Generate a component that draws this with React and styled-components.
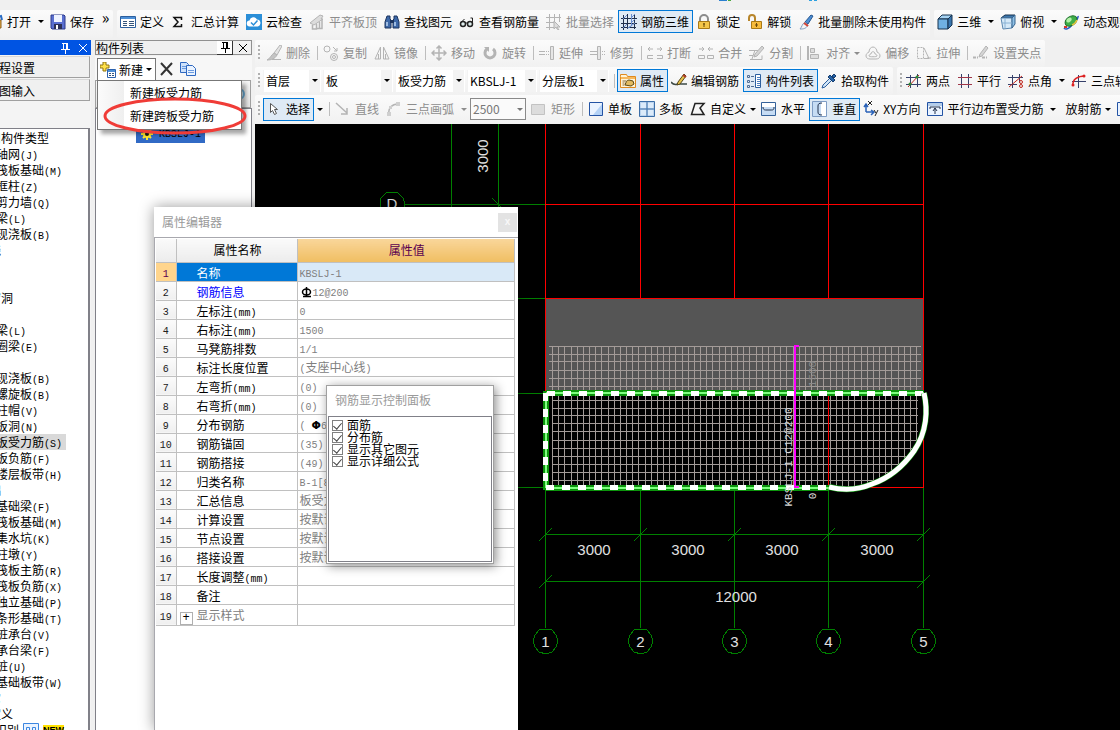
import React, { useState } from "react"
import styled, { createGlobalStyle, css } from "styled-components"

const colors = {
  chrome: "#f0f0f0",
  ink: "#000000",
  disabled: "#8d8d8d",
  line: "#b8b8b8",
  blue: "#0078d7",
  hot: "#dfeaf5",
  green: "#008000",
  red: "#ff0000",
}

const Global = createGlobalStyle`
  * {
    box-sizing: border-box;
  }

  body {
    margin: 0;
    overflow: hidden;
    background: ${colors.chrome};
    color: ${colors.ink};
    font-family: "Noto Sans CJK SC", sans-serif;
    font-size: 12px;
    line-height: 16px;
  }

  button, input, select {
    margin: 0;
    font: inherit;
    color: inherit;
  }
`

/* ---------- icons ---------- */

const g = "#b4b4b4"

const icons = {
  open: (
    <>
      <path d="M1 5h5l1 1h7v8H1z" fill="#e9b44c" stroke="#8a5a17" />
      <path d="M10 3l4-1 1 4" fill="none" stroke="#2a6cc4" strokeWidth="2" />
    </>
  ),
  save: (
    <>
      <path d="M1 1h13l1 1v13H2l-1-1z" fill="#5a6fd0" stroke="#2c3a8c" />
      <path d="M4 1h8v7H4z" fill="#eef3ff" />
      <path d="M4 10h8v5H4z" fill="#2b2f55" />
      <path d="M6 11h2v4H6z" fill="#fff" />
    </>
  ),
  define: (
    <>
      <path d="M.5 2.5h15v11H.5z" fill="#fff" stroke="#2c5f9e" />
      <path d="M1 3h14v2H1z" fill="#4d8fd6" />
      <path d="M3 7.5h4M3 9.5h4M3 11.5h4M9 7.5h5M9 9.5h5M9 11.5h5" stroke="#35557c" />
    </>
  ),
  sigma: <path d="M10.5 6V3.5H3L7 8l-4 4.5h7.5V10" fill="none" stroke="#111" strokeWidth="1.5" />,
  cloud: (
    <>
      <path d="M0 0h16v16H0z" fill="#2b8fd8" />
      <path d="M4 12.5a3 3 0 0 1-.5-6 4 4 0 0 1 7.5-1 3.6 3.6 0 0 1 1 7z" fill="#fff" />
      <path d="M5 8.5l2.500 2.500 4-4.500" fill="none" stroke="#2b8fd8" strokeWidth="1.5" />
    </>
  ),
  slab: (
    <>
      <path d="M1 9l10-8 3 1-2 3h2L5 11z" fill="#dcdcdc" stroke={g} />
      <path d="M3.500 11v4h4v-5M8 14.500h5V6M10.500 8v6" fill="none" stroke={g} strokeWidth="1.5" />
    </>
  ),
  find: (
    <>
      <path d="M3 2h3v3l1 1v8H1V8zM10 2h3l2 6v6H9V6l1-1z" fill="#3d68a8" stroke="#1c355f" />
      <path d="M6 6h4v3H6z" fill="#1c355f" />
      <path d="M3 8v4M11 8v4" stroke="#bdd6f3" strokeWidth="1.5" />
    </>
  ),
  glasses: (
    <>
      <circle cx="4" cy="10" r="2.500" fill="#dfeeee" stroke="#222" strokeWidth="1.5" />
      <circle cx="11" cy="10" r="2.500" fill="#dfeeee" stroke="#222" strokeWidth="1.5" />
      <path d="M6 9h3M1.500 9l4-4M13.500 10V4h-2" fill="none" stroke="#222" />
    </>
  ),
  batch: (
    <>
      <path d="M3.500 0v16M8.500 0v10M13.500 0v8M0 3.500h15M0 8.500h9M0 13.500h8" stroke={g} />
      <path d="M8 7l6 6-3 0 2 3-2-1-1-2-2 2z" fill="#ddd" stroke={g} />
    </>
  ),
  mesh3d: (
    <>
      <path d="M2.500 1v15M6.500 0v15M13.500 0v15M0 4.500h16M0 9.500h16M0 13.500h15" stroke="#20304c" />
      <path d="M2 14l4-4M10.500 0v12l-4 2M10 4l4-4M10 9l4-4M2 5l4-4M7 14l7-5" fill="none" stroke="#6a8fd1" />
    </>
  ),
  lock: (
    <>
      <path d="M4 8V5a4 4 0 0 1 8 0v3" fill="none" stroke="#8c8c8c" strokeWidth="2" />
      <path d="M2.500 7.500h11v7h-11z" fill="#f5c64a" stroke="#a97a18" />
      <path d="M8 9v4M7 10h2" stroke="#6b4a0a" />
    </>
  ),
  unlock: (
    <>
      <path d="M2 7V4a3 3 0 0 1 6 0v3" fill="none" stroke="#b8862c" strokeWidth="2" />
      <path d="M4.500 7.500h10v7h-10z" fill="#f8bc3c" stroke="#a97a18" />
      <path d="M9.500 9v4M8 11h3" stroke="#6b4a0a" />
    </>
  ),
  purge: (
    <>
      <path d="M13 1l2 1-5 8-3-2z" fill="#4d8fd6" stroke="#27578f" />
      <path d="M7 8l3 3c-2 4-5 4-8 4 2-2 2-5 5-7z" fill="#f6f6f6" stroke="#7f9cc0" />
      <path d="M6 9l4 3" stroke="#d34436" strokeWidth="2" />
    </>
  ),
  cube: (
    <>
      <path d="M1 5l4-4h10l-4 4z" fill="#a5d2f2" stroke="#16324f" />
      <path d="M1 5h10v10H1z" fill="#6fb0e2" stroke="#16324f" />
      <path d="M11 5l4-4v10l-4 4z" fill="#3975ad" stroke="#16324f" />
    </>
  ),
  top: (
    <>
      <path d="M1 4l4-3h10l-3 3z" fill="#3d77ad" stroke="#16324f" />
      <path d="M1 4h11v10l-9 1z" fill="#d5e9f8" stroke="#5b87b0" />
      <path d="M12 4l3-3v9l-3 4z" fill="#8ec0e6" stroke="#37648e" />
      <path d="M5 4v10M2 9h10" stroke="#8ab2d4" />
    </>
  ),
  orbit: (
    <>
      <path d="M1 14c1 2 5 1 8-3s7-6 6-9" fill="none" stroke="#2a56c4" strokeWidth="1.5" />
      <ellipse cx="8" cy="7" rx="6.500" ry="4.500" transform="rotate(-35 8 7)" fill="#3fae48" stroke="#1b6e2a" />
      <ellipse cx="6" cy="6" rx="3" ry="2" transform="rotate(-35 6 6)" fill="#b4f0a8" />
      <path d="M1 13l3 0" stroke="#d8342a" strokeWidth="2" />
      <path d="M9 11c3-1 4-3 5-5" fill="none" stroke="#e8c23a" strokeWidth="1.5" />
    </>
  ),
  brush: (
    <>
      <path d="M14 0l2 1-5 9-3-2z" fill="#e4e4e4" stroke={g} />
      <path d="M8 8l3 2c-2 4-6 5-10 5 3-1 4-5 7-7z" fill="#c4c4c4" stroke={g} />
      <path d="M6 14.500h9" stroke={g} />
    </>
  ),
  copy: (
    <>
      <circle cx="4" cy="4" r="3" fill="none" stroke={g} />
      <circle cx="11" cy="12" r="3.500" fill="none" stroke={g} />
      <circle cx="11" cy="12" r="1.500" fill="none" stroke={g} />
      <path d="M10 2l4 4M14 3v3h-3" fill="none" stroke={g} />
    </>
  ),
  mirror: <path d="M6.500 2v12H1zM9.500 2v12H15zM4.500 9v5M11.500 9v5" fill="none" stroke={g} />,
  move: (
    <path
      d="M8 1v14M1 8h14M5.500 3.500L8 1l2.500 2.500M5.500 12.500L8 15l2.500-2.500M3.500 5.500L1 8l2.500 2.500M12.500 5.500L15 8l-2.500 2.500"
      fill="none"
      stroke={g}
      strokeWidth="1.5"
    />
  ),
  rotate: (
    <>
      <path d="M5 4a5 5 0 1 0 6 0" fill="none" stroke={g} strokeWidth="3" />
      <path d="M2 2h5v5z" fill={g} />
    </>
  ),
  extend: (
    <>
      <path d="M0 6.500h6M0 9.500h6" stroke={g} />
      <path d="M7 6.500h4M7 9.500h4" stroke={g} strokeDasharray="1 1" />
      <path d="M11.500 1.500h3v13h-3z" fill="#e6e6e6" stroke={g} />
    </>
  ),
  trim: (
    <>
      <path d="M0 6.500h7M0 9.500h7" stroke={g} />
      <path d="M12 6.500h4M12 9.500h4" stroke={g} strokeDasharray="1 1" />
      <path d="M7.500 1.500h3v13h-3z" fill="#e6e6e6" stroke={g} />
    </>
  ),
  split: (
    <>
      <path d="M6 4H1l2-2M1 4l2 2M10 4h5l-2-2M15 4l-2 2" fill="none" stroke={g} />
      <path d="M6 10.500H.5v3H6M10 10.500h5.500v3H10" fill="none" stroke={g} />
    </>
  ),
  merge: (
    <>
      <path d="M1 4h5L4 2M6 4L4 6M15 4h-5l2-2M10 4l2 2" fill="none" stroke={g} />
      <path d="M.5 10.500h6v3h-6zM9.500 10.500h6v3h-6z" fill="none" stroke={g} />
    </>
  ),
  cut: (
    <>
      <path d="M0 5.500h9M0 10.500h4M1 14.500h12v-4M3 14l3-9" fill="none" stroke={g} />
      <path d="M13 1l2 2-7 8-3 1 1-3z" fill="#d5d5d5" stroke={g} />
    </>
  ),
  align: (
    <>
      <path d="M2 1v14" stroke={g} strokeWidth="2" />
      <path d="M4.500 3.500h4v4h-4zM4.500 9.500h8v4h-8z" fill="#dedede" stroke={g} />
    </>
  ),
  offset: (
    <>
      <path d="M1 11c0-2 1-3 3-4 0-3 2-5 4-5s4 2 4 5c2 1 3 2 3 4s-2 3-4 3H5c-2 0-4-1-4-3z" fill="none" stroke={g} />
      <path d="M4 11c0-1 1-2 2-2 0-3 4-3 4 0 1 0 2 1 2 2 0 1-8 1-8 0z" fill="none" stroke={g} />
    </>
  ),
  stretch: (
    <>
      <path d="M1.500 2.500h6v11h-6z" fill="none" stroke={g} strokeDasharray="2 1" />
      <path d="M8 3l5 10.500H8M11 13h4" fill="none" stroke={g} />
    </>
  ),
  grip: (
    <>
      <path d="M0 12.500h5M9 12.500h5" stroke={g} strokeWidth="2" strokeDasharray="3 1" />
      <path d="M13 1l2 2-6 8-3 1 1-3z" fill="#d5d5d5" stroke={g} />
    </>
  ),
  props: (
    <>
      <path d="M.5 3.500v-2h6l1 2h8v11H.5z" fill="#fff3d6" stroke="#e08a1e" />
      <path d="M1 4h14v2H1z" fill="#f6b85c" />
      <path d="M5 12c1-3 2-5 4-5l4 1 1 3-3 2z" fill="#e2bb62" stroke="#5d4a17" />
      <path d="M2.500 8h4M2.500 10h2M2.500 12h2" stroke="#8a6a3a" />
    </>
  ),
  edit: (
    <>
      <path d="M0 9c2 3 4 3 7 2h9" stroke="#3d4a46" strokeWidth="1.5" fill="none" />
      <path d="M13 1l2 2-6 8-3 1 1-3z" fill="#e8c24a" stroke="#54461a" />
      <path d="M12 2l3 2" stroke="#b03a2a" strokeWidth="2" />
    </>
  ),
  list: (
    <>
      <path
        d="M1.500 2.500h2v2h-2zM1.500 7.500h2v2h-2zM1.500 12.500h2v2h-2zM5 3.500h3M5 8.500h3M5 13.500h3"
        fill="none"
        stroke="#4e6c94"
      />
      <path d="M9.500 1.500h5v13h-5z" fill="#fff" stroke="#2c5f9e" />
      <path d="M11 4.500h3M11 6.500h3M11 8.500h3M11 10.500h3M11 12.500h3" stroke="#4d7fc0" />
    </>
  ),
  picker: (
    <>
      <path d="M9 5l2 2-7 7-3 1 1-3z" fill="#cfe4f7" stroke="#2c5f9e" />
      <path d="M9 2l5 5-2 2-5-5zM11 3l2-2 2 2-2 2z" fill="#2763a8" stroke="#163d6d" />
    </>
  ),
  twoPoint: (
    <>
      <path d="M4.500 2v13M11.500 1v13M0 4.500h15M0 11.500h15" stroke="#35406a" />
      <path d="M2 14L13 2" stroke="#c0281e" />
      <circle cx="4" cy="11" r="1.500" fill="#2e8a34" />
      <circle cx="11" cy="4" r="1.500" fill="#2e8a34" />
    </>
  ),
  parallel: (
    <>
      <path d="M4.500 1v14M11.500 1v14" stroke="#35406a" />
      <path d="M1 4.500h14M1 11.500h14" stroke="#a0384a" />
    </>
  ),
  angle: (
    <>
      <path d="M4.500 2v13M11.500 1v9M0 4.500h15M0 11.500h9" stroke="#35406a" />
      <path d="M1 14L14 3" stroke="#c0281e" />
      <circle cx="13" cy="9" r="1.500" fill="none" stroke="#c0281e" />
      <circle cx="13" cy="13" r="1.500" fill="none" stroke="#c0281e" />
    </>
  ),
  arcAxis: (
    <>
      <path d="M7.500 2v13M1 8.500h14" stroke="#35406a" />
      <path d="M2 13C1 6 7 3 14 3" fill="none" stroke="#d22" strokeWidth="1.5" />
      <circle cx="2" cy="12" r="1.500" fill="#d22" />
      <circle cx="13" cy="3" r="1.500" fill="#d22" />
    </>
  ),
  pointer: <path d="M4.500 2.500v9l2-2 2 4 2-1-2-4h3z" fill="#fff" stroke="#555" />,
  line: <path d="M1 2l11 10M12 7v6H6" fill="none" stroke={g} strokeWidth="1.5" />,
  arc: (
    <>
      <path d="M3 13C2 7 6 3 12 3" fill="none" stroke={g} strokeWidth="1.5" />
      <path d="M1 11h4v4H1zM10 1h4v4h-4zM3 5h3v3H3z" fill="#cfcfcf" />
    </>
  ),
  rect: <path d="M.5 3.500h13v10H.5z" fill="#dcdcdc" stroke="#c2c2c2" />,
  single: (
    <>
      <path d="M1.500 1.500h13v13h-13z" fill="#eaf3ff" stroke="#2353a4" />
      <path d="M14 3v11H5z" fill="#b4d2f6" />
    </>
  ),
  multi: (
    <>
      <path d="M.5.5h15v15H.5z" fill="#bcd4ee" stroke="#3b6ea8" />
      <path d="M8 1v14M1 8h14" stroke="#3b6ea8" strokeWidth="1" />
      <path d="M2 2h5v5H2zM9 2h5v5H9zM2 9h5v5H2zM9 9h5v5H9z" fill="#dcebfa" />
    </>
  ),
  custom: <path d="M5 2.500h9L10 7l4 6.500H1.500z" fill="none" stroke="#222" strokeWidth="1.5" />,
  horiz: (
    <>
      <path d="M.5 1.500h14v13H.5z" fill="#c6dcf4" stroke="#35629a" />
      <path d="M1 2h13v4H1z" fill="#fff" />
      <path d="M2 6c0 3 2 3 3 3h5c2 0 3 0 3-3" fill="none" stroke="#20304c" />
    </>
  ),
  vert: (
    <>
      <path d="M.5.5h14v15H.5z" fill="#c6dcf4" stroke="#7e9cc4" />
      <path d="M9 1h5v14H9z" fill="#fff" />
      <path d="M10 2C7 2 6 3 6 5v6c0 2 1 3 4 3" fill="none" stroke="#20304c" />
    </>
  ),
  xy: (
    <>
      <path d="M3 11V4M1 6l2-3 2 3M3 11h7M8 9l3 2-3 3" fill="none" stroke="#2a62b8" strokeWidth="1.5" />
      <path d="M5 0l4 4M9 0L5 4M11 9l2 3M15 9l-3 6" stroke="#222" />
    </>
  ),
  edge: (
    <>
      <path d="M.5 1.500h15v13H.5z" fill="#eaf3ff" stroke="#2353a4" />
      <path d="M1 2h14v3H1z" fill="#b4cdea" />
      <path d="M3 8V6h10v2M8 13V7M6 10l2-3 2 3" fill="none" stroke="#20304c" />
    </>
  ),
  add: (
    <>
      <path d="M3 0h3v3h3v3H6v3H3V6H0V3h3z" fill="#ffe14a" stroke="#8f7413" />
      <path d="M7.500 7.500h8v8h-8z" fill="#fff" stroke="#2c62ae" />
      <path d="M8 8h7v2H8z" fill="#4d8fd6" />
      <path d="M9 11.500h2M12 11.500h2M9 13.500h2M12 13.500h2" stroke="#35557c" />
    </>
  ),
  remove: <path d="M2 2l11 12M13 2L2 14" stroke="#333" strokeWidth="2" />,
  duplicate: (
    <>
      <path d="M.5 1.500h6l2 2v8h-8z" fill="#cfe2fa" stroke="#2f68c0" />
      <path d="M6.500 4.500h6l3 3v7h-9z" fill="#eaf3ff" stroke="#2f68c0" />
      <path d="M2 5.500h4M2 7.500h4M8 9.500h6M8 11.500h6" stroke="#6b9be0" />
    </>
  ),
  search: <circle cx="9" cy="8" r="5" fill="#eaf6fd" stroke="#6fb4e0" strokeWidth="2" />,
  pin: <path d="M5 3.500h6M6.500 3v6M9.500 3v6M10.500 3v6M4 9.500h9M8.500 10v4" fill="none" stroke="currentColor" />,
  close: <path d="M4 4l8 8M12 4l-8 8" stroke="currentColor" />,
  gear: (
    <>
      <path d="M7 1v12M1 7h12M3 3l8 8M11 3l-8 8" stroke="#ffe62e" strokeWidth="2" />
      <circle cx="7" cy="7" r="3" fill="#1b1b1b" stroke="#ffe62e" strokeWidth="2" />
    </>
  ),
  book: (
    <path
      d="M.5 1.500h15v13H.5zM3.500 14V5.500h3V14M3.500 9.500h3M9.500 14V5.500h3V14M9.500 9.500h3"
      fill="#eaf3ff"
      stroke="#3c86e0"
    />
  ),
}

const Glyph = styled.svg`
  display: block;
  flex: none;
  width: 16px;
  height: 16px;
`

const Icon = ({ name }) => (
  <Glyph viewBox="0 0 16 16" aria-hidden="true">
    {icons[name]}
  </Glyph>
)

/* ---------- toolbars ---------- */

const Bar = styled.div`
  display: flex;
  gap: 4px;
  height: ${(p) => p.$height}px;
  overflow: hidden;
`

const Strip = styled.div`
  display: flex;
  flex: ${(p) => (p.$grow ? "1 0 auto" : "none")};
  align-items: center;
  padding: 0 0 ${(p) => (p.$low ? 1 : 5)}px;
  border-radius: 2px;
  background: linear-gradient(#fbfbfb, #f1f1f1);
`

const Grip = styled.span`
  flex: none;
  width: 6px;
  height: 16px;
  margin-right: ${(p) => p.$gap || 0}px;
  background: repeating-linear-gradient(#b0b0b0 0 2px, transparent 2px 4px) 3px 0 / 2px 100% no-repeat;
`

const Rule = styled.span`
  flex: none;
  width: 6px;
  height: 14px;
  background: linear-gradient(#bdbdbd, #bdbdbd) 3px 0 / 1px 100% no-repeat;
`

const ToolButton = styled.button`
  display: flex;
  flex: none;
  align-items: center;
  gap: 4px;
  height: 23px;
  padding: 0 3px 0 ${(p) => (p.$bare ? 5 : 2)}px;
  border: 1px solid transparent;
  background: transparent;
  white-space: nowrap;

  &:disabled {
    color: ${colors.disabled};
  }

  ${(p) =>
    p.$active &&
    css`
      border-color: ${colors.blue};
      background: ${colors.hot};
    `}
`

const DropButton = styled.button`
  display: flex;
  flex: none;
  align-items: center;
  justify-content: flex-start;
  width: ${(p) => (p.$tight ? 8 : 12)}px;
  height: 23px;
  padding: 0 0 0 ${(p) => (p.$tight ? 0 : 3)}px;
  border: 0;
  background: transparent;

  &:disabled {
    color: ${colors.disabled};
  }
`

const Caret = styled.span`
  width: 0;
  height: 0;
  border: 3px solid transparent;
  border-top-color: currentColor;
  border-bottom-width: 0;
`

const Picker = styled.label`
  display: grid;
  flex: none;
  align-items: center;
  width: ${(p) => p.$width}px;
  height: 22px;
  margin-right: 2px;
  border: 1px solid ${(p) => (p.$framed ? "#8a8a8a" : "transparent")};
  background: ${(p) =>
    p.$framed ? "#fafafa" : "linear-gradient(to left, #f3f3f3 11px, #ffffff 11px)"};
  color: ${(p) => (p.$framed ? "#777777" : "inherit")};

  & > * {
    grid-area: 1 / 1;
  }

  select {
    width: 100%;
    height: 20px;
    padding: 0 2px;
    border: 0;
    background: transparent;
    opacity: 1;
    appearance: none;
  }

  ${Caret} {
    justify-self: end;
    margin-right: 2px;
    pointer-events: none;
  }
`

const Tool = ({ icon, label, off, on, drop }) => (
  <>
    <ToolButton disabled={off} $active={on} $bare={!icon} aria-pressed={on}>
      {icon && <Icon name={icon} />}
      {label}
    </ToolButton>
    {drop && (
      <DropButton disabled={off} $tight={drop === "tight"} aria-label={`${label} ▾`}>
        <Caret />
      </DropButton>
    )}
  </>
)

const Combo = ({ value, width, name, framed }) => (
  <Picker $width={width} $framed={framed}>
    <select aria-label={name} defaultValue={value} disabled={framed}>
      <option>{value}</option>
    </select>
    <Caret />
  </Picker>
)

const renderTools = (items) =>
  items.map((item, i) => (item === "|" ? <Rule key={i} /> : <Tool key={i} {...item} />))

const mainTools = [
  { icon: "define", label: "定义" },
  { icon: "sigma", label: "汇总计算" },
  { icon: "cloud", label: "云检查" },
  { icon: "slab", label: "平齐板顶", off: true },
  { icon: "find", label: "查找图元" },
  { icon: "glasses", label: "查看钢筋量" },
  { icon: "batch", label: "批量选择", off: true },
  { icon: "mesh3d", label: "钢筋三维", on: true },
  { icon: "lock", label: "锁定" },
  { icon: "unlock", label: "解锁" },
  { icon: "purge", label: "批量删除未使用构件" },
]

const viewTools = [
  { icon: "cube", label: "三维", drop: true },
  { icon: "top", label: "俯视", drop: true },
  { icon: "orbit", label: "动态观察" },
]

const editTools = [
  { icon: "brush", label: "删除", off: true },
  "|",
  { icon: "copy", label: "复制", off: true },
  { icon: "mirror", label: "镜像", off: true },
  "|",
  { icon: "move", label: "移动", off: true },
  { icon: "rotate", label: "旋转", off: true },
  "|",
  { icon: "extend", label: "延伸", off: true },
  { icon: "trim", label: "修剪", off: true },
  "|",
  { icon: "split", label: "打断", off: true },
  { icon: "merge", label: "合并", off: true },
  { icon: "cut", label: "分割", off: true },
  "|",
  { icon: "align", label: "对齐", off: true, drop: "tight" },
  { icon: "offset", label: "偏移", off: true },
  { icon: "stretch", label: "拉伸", off: true },
  "|",
  { icon: "grip", label: "设置夹点", off: true },
]

const panelTools = [
  "|",
  { icon: "props", label: "属性", on: true },
  { icon: "edit", label: "编辑钢筋" },
  { icon: "list", label: "构件列表", on: true },
  { icon: "picker", label: "拾取构件" },
]

const axisTools = [
  { icon: "twoPoint", label: "两点" },
  { icon: "parallel", label: "平行" },
  { icon: "angle", label: "点角", drop: true },
  { icon: "arcAxis", label: "三点辅轴" },
]

const drawTools = [
  { icon: "pointer", label: "选择", on: true, drop: true },
  "|",
  { icon: "line", label: "直线", off: true },
  { icon: "arc", label: "三点画弧", off: true, drop: true },
]

const slabTools = [
  { icon: "rect", label: "矩形", off: true },
  "|",
  { icon: "single", label: "单板" },
  { icon: "multi", label: "多板" },
  { icon: "custom", label: "自定义", drop: "tight" },
  { icon: "horiz", label: "水平" },
  { icon: "vert", label: "垂直", on: true },
  { icon: "xy", label: "XY方向" },
  { icon: "edge", label: "平行边布置受力筋", drop: true },
  { label: "放射筋", drop: "tight" },
  { icon: "single", label: "" },
]

/* ---------- page frame ---------- */

const Shell = styled.div`
  position: relative;
  display: flex;
  flex-direction: column;
  height: 100vh;
  overflow: hidden;
`

const Edge = styled.svg`
  display: block;
  flex: none;
  width: 100%;
  height: 10px;
`

const FileStrip = styled(Strip)`
  width: 113px;
  overflow: hidden;
  justify-content: flex-end;
`

const More = styled.button`
  flex: none;
  width: 15px;
  height: 22px;
  padding: 0 0 10px;
  border: 0;
  background: transparent;
  font-size: 16px;
  line-height: 12px;
`

const Body = styled.div`
  display: flex;
  flex: 1;
  min-height: 0;
  padding-top: 2px;
`

const Work = styled.main`
  display: flex;
  flex: 1;
  flex-direction: column;
  min-width: 0;
  margin-left: 3px;
`

/* ---------- left panels ---------- */

const Nav = styled.aside`
  display: flex;
  flex: none;
  flex-direction: column;
  width: 91px;
  overflow: hidden;
  background: #f4f4f4;
`

const PanelTitle = styled.header`
  display: flex;
  flex: none;
  align-items: center;
  justify-content: flex-end;
  gap: 2px;
  height: 15px;
  background: #0054e3;
  color: #ffffff;
`

const IconButton = styled.button`
  display: flex;
  align-items: center;
  justify-content: center;
  width: ${(p) => (p.$wide ? 20 : 16)}px;
  height: 14px;
  padding: 0;
  border: 0;
  background: transparent;
`

const Section = styled.button`
  flex: none;
  height: 22px;
  margin: 1px 1px 0 -24px;
  padding: 1px 0 0 10px;
  border: 1px solid #a0a0a0;
  border-top-color: #d8d8d8;
  background: #f0f0f0;
  text-align: left;
`

const Types = styled.div`
  flex: 1;
  margin: 27px 1px 0 0;
  padding-top: 1px;
  overflow: hidden;
  border: 1px solid #808088;
  border-width: 1px 2px 0 0;
  background: #ffffff;
`

const TypeList = styled.ul`
  margin: 0 0 0 -23px;
  padding: 0;
  list-style: none;
`

const TypeRow = styled.li`
  display: flex;
  align-items: center;
  gap: 4px;
  width: max-content;
  height: 16px;
  padding-left: ${(p) => (p.$child ? 19 : 0)}px;
  padding-right: 4px;
  background: ${(p) => (p.$selected ? "#d9d9d9" : "transparent")};
  white-space: nowrap;
`

const NewTag = styled.strong`
  background: #ffe100;
  font: bold 9px/10px "Liberation Sans", sans-serif;
`

const Members = styled.aside`
  display: flex;
  flex: none;
  flex-direction: column;
  width: 157px;
  margin-left: 4px;
`

const MembersTitle = styled(PanelTitle)`
  justify-content: space-between;
  border: 1px solid #909090;
  background: ${colors.chrome};
  color: ${colors.ink};

  div {
    display: flex;
    gap: 2px;
  }
`

const PinButton = styled(IconButton)`
  border: 1px solid #333333;
  border-width: 0 1px 1px 0;
  background: #ffffff;
`

const MembersTools = styled.div`
  display: flex;
  align-items: center;
  gap: 1px;
  height: 24px;
  padding: 2px 0 0 2px;
  margin-top: 1px;
  background: #f7f7f7;
`

const MenuAnchor = styled.div`
  position: relative;
  z-index: 2;
`

const NewButton = styled.button`
  display: flex;
  align-items: center;
  gap: 3px;
  height: 23px;
  padding: 0 3px 0 2px;
  border: 1px solid #777777;
  border-bottom: 0;
  background: #ffffff;
`

const Menu = styled.div`
  position: absolute;
  top: 22px;
  left: 0;
  width: 145px;
  padding: 1px;
  border: 1px solid #777777;
  background: linear-gradient(to right, #fbfbfb, #efefef 26px, #ffffff 26px);
  box-shadow: 4px 4px 4px rgba(0, 0, 0, 0.35);
`

const MenuItem = styled.button`
  display: block;
  width: 100%;
  height: 23px;
  padding: 0 0 0 31px;
  border: 0;
  background: transparent;
  text-align: left;
  white-space: nowrap;
`

const Ring = styled.svg`
  position: absolute;
  top: 38px;
  left: 4px;
  width: 148px;
  height: 40px;
  pointer-events: none;
`

const SearchRow = styled.div`
  display: flex;
  align-items: center;
  justify-content: flex-end;
  height: 28px;
  margin-right: 1px;
  padding-right: 4px;
  border: 1px solid #a0a0a0;
  background: linear-gradient(#f6f6f6, #e6e6e6);
`

const Tree = styled.div`
  flex: 1;
  padding: 17px 0 0 40px;
  border: 1px solid #808088;
  border-width: 1px 1px 0 1px;
  background: #ffffff;
`

const Member = styled.div`
  display: flex;
  align-items: center;
  gap: 3px;
  width: 69px;
  height: 17px;
  padding-left: 4px;
  background: #316ac5;
`

const Half = styled.span`
  font-family: "Liberation Mono", monospace;
  font-size: 10px;
  line-height: 10px;
`

// Latin runs are set at half the width of a CJK glyph
const Mixed = ({ children }) =>
  children.split(/([\x20-\x7e]+)/).map((run, i) => (i % 2 ? <Half key={i}>{run}</Half> : run))

const types = [
  ["常用构件类型"],
  ["轴网(J)", 1],
  ["筏板基础(M)", 1],
  ["框柱(Z)", 1],
  ["剪力墙(Q)", 1],
  ["梁(L)", 1],
  ["现浇板(B)", 1],
  ["轴线"],
  ["柱"],
  ["墙"],
  ["门窗洞"],
  ["梁"],
  ["梁(L)", 1],
  ["圈梁(E)", 1],
  ["板"],
  ["现浇板(B)", 1],
  ["螺旋板(B)", 1],
  ["柱帽(V)", 1],
  ["板洞(N)", 1],
  ["板受力筋(S)", 1],
  ["板负筋(F)", 1],
  ["楼层板带(H)", 1],
  ["基础"],
  ["基础梁(F)", 1],
  ["筏板基础(M)", 1],
  ["集水坑(K)", 1],
  ["柱墩(Y)", 1],
  ["筏板主筋(R)", 1],
  ["筏板负筋(X)", 1],
  ["独立基础(P)", 1],
  ["条形基础(T)", 1],
  ["桩承台(V)", 1],
  ["承台梁(F)", 1],
  ["桩(U)", 1],
  ["基础板带(W)", 1],
  ["其它"],
  ["自定义"],
  ["CAD识别"],
]

/* ---------- drawing ---------- */

const Canvas = styled.svg`
  display: block;
  flex: 1;
  width: 100%;
  min-height: 0;
  background: #000000;

  text {
    fill: #e0e0e0;
    font-family: "Liberation Sans", sans-serif;
    font-size: 15px;
    text-anchor: middle;
  }

  .tag {
    fill: #d8d8d8;
    font-family: "Liberation Mono", monospace;
    font-size: 11px;
  }

  .dim {
    fill: #8a8a8a;
  }
`

const axes = [545.5, 640.5, 734.5, 828.5, 923.5]
const barsX = Array.from({ length: 60 }, (_, i) => Math.round(552 + i * 6.17) + 0.5)
const barsTop = [346.5, 354.5, 361.5, 370.5, 378.5, 386.5]
const barsLow = [400.5, 408.5, 415.5, 423.5, 431.5, 440.5, 448.5, 456.5, 464.5, 472.5, 480.5]
const curve = "M924 393C928 410 927 432 914 451C902 468 889 478 872 484C858 490 845 491 829 487"

const tick = (x, y) => `M${x - 6.5} ${y + 6.5}L${x + 6.5} ${y - 6.5}`

// twelve-sided axis bubble
const bubble = (cx, cy) =>
  Array.from({ length: 12 }, (_, i) => {
    const a = (i * Math.PI) / 6
    return `${Math.round(cx + 12.5 * Math.cos(a))},${Math.round(cy + 12.5 * Math.sin(a))}`
  }).join(" ")

const Drawing = () => (
  <Canvas aria-label="KBSLJ-1">
    <defs>
      <clipPath id="slab">
        <path d={`${curve}H545V340H924z`} />
      </clipPath>
    </defs>
    <g transform="translate(-255 -124)" fill="none">
      <path d="M546 299H923V393H546z" fill="#555555" />
      <g stroke={colors.green} shapeRendering="crispEdges">
        <path d="M451.5 124V240M498.5 124V240M405 204.5H545M500 298.5H545M500 393.5H545M500 487.5H545" />
        <path d="M492 198L505 211" />
        {axes.map((x) => (
          <path key={x} d={`M${x} 488V628`} />
        ))}
        <path d="M545 534.5H923M545 581.5H923" />
        {axes.map((x) => (
          <path key={x} d={tick(x, 534.5)} />
        ))}
        <path d={tick(545.5, 581.5)} />
        <path d={tick(923.5, 581.5)} />
        {axes.map((x) => (
          <polygon key={x} points={bubble(x, 641)} />
        ))}
        <polygon points={bubble(392, 204)} />
      </g>
      <g stroke={colors.red} shapeRendering="crispEdges">
        <path d="M545.5 124V393M923.5 124V488M640.5 124V298M734.5 124V298M828.5 124V298" />
        <path d="M545 204.5H923M545 298.5H923M860 487.5H923" />
      </g>
      <g stroke="#a39b98" clipPath="url(#slab)" shapeRendering="crispEdges">
        {barsX.map((x) => (
          <path key={x} d={`M${x} 346V487`} />
        ))}
        {barsTop.map((y) => (
          <path key={y} d={`M549 ${y}H921`} />
        ))}
        {barsLow.map((y) => (
          <path key={y} d={`M552 ${y}H918`} />
        ))}
      </g>
      <path d="M828.5 395V487" stroke={colors.red} shapeRendering="crispEdges" />
      <g shapeRendering="crispEdges">
        <path d="M546 393H924M546 488H829M546 391V490" stroke="#0c940c" strokeWidth="6" />
        <path d="M546 393H924M546 488H829M546 393V488" stroke="#7fff7f" strokeWidth="2" />
        <path
          d="M547 393.5H924M546 487.5H829M545.5 393V488"
          stroke="#ffffff"
          strokeWidth="5"
          strokeDasharray="8 8"
        />
      </g>
      <path d={curve} stroke="#0c940c" strokeWidth="6" />
      <path d={curve} stroke="#ffffff" strokeWidth="5" />
      <text className="tag" transform="translate(792 457) rotate(-90)">
        KBSLJ-1 C12@200
      </text>
      <text className="tag dim" transform="translate(816 374) rotate(-90)">
        1500
      </text>
      <text className="tag" transform="translate(816 496) rotate(-90)">
        0
      </text>
      <path d="M799 346H795V487H799" stroke="#ff00ff" strokeWidth="2" shapeRendering="crispEdges" />
      <text transform="translate(488 156) rotate(-90)">3000</text>
      <text x="392" y="209">
        D
      </text>
      {[594, 688, 782, 877].map((x) => (
        <text key={x} x={x} y="555">
          3000
        </text>
      ))}
      <text x="736" y="602">
        12000
      </text>
      {axes.map((x, i) => (
        <text key={x} x={x} y="647">
          {i + 1}
        </text>
      ))}
    </g>
  </Canvas>
)

/* ---------- floating windows ---------- */

const Editor = styled.section`
  position: absolute;
  top: 207px;
  left: 154px;
  bottom: 0;
  width: 364px;
  background: #ffffff;
  box-shadow: 0 0 14px rgba(0, 0, 0, 0.4);
`

const EditorHead = styled.header`
  display: flex;
  align-items: center;
  justify-content: space-between;
  height: 31px;
  padding: 0 1px 0 8px;
  border-bottom: 1px solid #a8a8ae;
  color: #9a9a9a;

  button {
    width: 19px;
    height: 19px;
    padding: 0;
    border: 0;
    background: #e3e3e3;
    color: #f8f8f8;
    font: bold 10px/16px "Liberation Sans", sans-serif;
  }
`

const Sheet = styled.div`
  height: 100%;
  padding: 1px 2px 0 1px;
  border-left: 1px solid #a8a8ae;
`

const Grid = styled.table`
  width: 359px;
  table-layout: fixed;
  border-collapse: collapse;
  line-height: 16px;

  th,
  td {
    height: 19px;
    padding: 2px 0 0 2px;
    border: 1px solid #c0c0c0;
    border-left: 0;
    overflow: hidden;
    font-weight: normal;
    text-align: left;
    white-space: nowrap;
  }

  thead th {
    height: 23px;
    padding-top: 0;
    border-top: 0;
    background: linear-gradient(#fafafa, #ececec);
    text-align: center;
  }

  thead th:last-child {
    background: linear-gradient(#f9d69a, #f0be62);
    color: #5a0050;
  }

  td {
    color: #808080;
  }
`

const Index = styled.th`
  && {
    padding-top: 0;
    padding-left: 0;
    background: ${(p) => (p.$on ? "#ffd58d" : "linear-gradient(#fbfbfb, #efefef)")};
    color: ${(p) => (p.$on ? "#5a0050" : "#202020")};
    text-align: center;
  }
`

const Label = styled.th`
  && {
    padding-left: ${(p) => (p.$fold ? 3 : 20)}px;
    background: ${(p) => (p.$on ? colors.blue : "#ffffff")};
    color: ${(p) => p.$color || "#000000"};
  }
`

const Value = styled.td`
  && {
    padding-top: 0;
    background: ${(p) => (p.$on ? "#d9e9f7" : "#ffffff")};
  }
`

const Fold = styled.button`
  width: 13px;
  height: 13px;
  margin-right: 4px;
  padding: 0;
  border: 1px solid #b0b0b0;
  background: #ffffff;
  color: #000000;
  font: 12px/11px "Liberation Mono", monospace;
  vertical-align: -1px;
`

const Phi = styled.span`
  color: #000000;
  font: bold 11px/10px "DejaVu Sans", sans-serif;
`

const Rebar = styled.svg`
  width: 13px;
  height: 12px;
  vertical-align: -2px;
`

const rows = [
  ["名称", "KBSLJ-1"],
  ["钢筋信息", "12@200", "hooked"],
  ["左标注(mm)", "0"],
  ["右标注(mm)", "1500"],
  ["马凳筋排数", "1/1"],
  ["标注长度位置", "(支座中心线)"],
  ["左弯折(mm)", "(0)"],
  ["右弯折(mm)", "(0)"],
  ["分布钢筋", "6@200)", "plain"],
  ["钢筋锚固", "(35)"],
  ["钢筋搭接", "(49)"],
  ["归类名称", "B-1[80]"],
  ["汇总信息", "板受力筋"],
  ["计算设置", "按默认计算"],
  ["节点设置", "按默认节点"],
  ["搭接设置", "按默认搭接"],
  ["长度调整(mm)", ""],
  ["备注", ""],
  ["显示样式", ""],
]

const labelColor = (i) => ({ 0: "#ffffff", 1: "#0000ff", 18: "#808080" })[i]

const Mark = ({ kind }) =>
  kind === "hooked" ? (
    <Rebar viewBox="0 0 13 12" aria-hidden="true">
      <ellipse cx="6.5" cy="6" rx="4" ry="3" fill="none" stroke="#000" strokeWidth="1.5" />
      <path d="M6.5 1v10M3 10.5h8" stroke="#000" strokeWidth="1.5" />
    </Rebar>
  ) : (
    <>
      <Half>( </Half>
      <Phi>Φ</Phi>
    </>
  )

const PropertyEditor = () => (
  <Editor aria-label="属性编辑器">
    <EditorHead>
      属性编辑器
      <button aria-label="关闭">x</button>
    </EditorHead>
    <Sheet>
      <Grid>
        <colgroup>
          <col style={{ width: 20 }} />
          <col style={{ width: 121 }} />
          <col />
        </colgroup>
        <thead>
          <tr>
            <th />
            <th>属性名称</th>
            <th>属性值</th>
          </tr>
        </thead>
        <tbody>
          {rows.map(([name, value, mark], i) => (
            <tr key={name}>
              <Index $on={i === 0}>
                <Mixed>{String(i + 1)}</Mixed>
              </Index>
              <Label $on={i === 0} $color={labelColor(i)} $fold={i === 18}>
                {i === 18 && <Fold aria-label="展开">+</Fold>}
                <Mixed>{name}</Mixed>
              </Label>
              <Value $on={i === 0}>
                {mark && <Mark kind={mark} />}
                <Mixed>{value}</Mixed>
              </Value>
            </tr>
          ))}
        </tbody>
      </Grid>
    </Sheet>
  </Editor>
)

const Display = styled.section`
  position: absolute;
  top: 385px;
  left: 326px;
  width: 168px;
  padding: 1px;
  border: 1px solid #a0a0a0;
  background: #ffffff;
  box-shadow: 2px 2px 10px rgba(0, 0, 0, 0.45);

  h2 {
    margin: 0;
    padding: 5px 0 8px 7px;
    color: #9a9a9a;
    font-size: 12px;
    font-weight: normal;
    line-height: 16px;
  }
`

const Checks = styled.div`
  min-height: 146px;
  padding: 2px 3px;
  border: 1px solid #808088;
`

const Check = styled.label`
  display: flex;
  align-items: center;
  gap: 4px;
  height: 12px;
  line-height: 12px;
  white-space: nowrap;

  input {
    display: flex;
    justify-content: center;
    width: 11px;
    height: 11px;
    border: 1px solid #808080;
    background: #ffffff;
    appearance: none;
  }

  input:checked::after {
    content: "";
    width: 4px;
    height: 7px;
    border: 1px solid #404040;
    border-width: 0 1px 1px 0;
    transform: rotate(40deg);
  }
`

const DisplayPanel = () => {
  const [shown, setShown] = useState({ 面筋: true, 分布筋: true, 显示其它图元: true, 显示详细公式: true })

  return (
    <Display>
      <h2>钢筋显示控制面板</h2>
      <Checks>
        {Object.keys(shown).map((name) => (
          <Check key={name}>
            <input
              type="checkbox"
              checked={shown[name]}
              onChange={() => setShown({ ...shown, [name]: !shown[name] })}
            />
            {name}
          </Check>
        ))}
      </Checks>
    </Display>
  )
}

const App = () => (
  <Shell>
    <Global />
    <Edge aria-hidden="true">
      <path d="M719 0h8v1h-8z" fill="#2a7fd0" />
      <path d="M728 0h3v1h-3z" fill="#4aa83c" />
      <path d="M809 0h3v1h-3zM814 0h3v1h-3z" fill="#2aa0e0" />
    </Edge>
    <Bar $height={28}>
      <FileStrip>
        <Tool icon="open" label="打开" drop />
        <Tool icon="save" label="保存" />
        <More aria-label="更多">»</More>
      </FileStrip>
      <Strip>{renderTools(mainTools)}</Strip>
      <Strip $grow>{renderTools(viewTools)}</Strip>
    </Bar>
    <Body>
      <Nav>
        <PanelTitle>
          <IconButton aria-label="固定">
            <Icon name="pin" />
          </IconButton>
          <IconButton aria-label="关闭">
            <Icon name="close" />
          </IconButton>
        </PanelTitle>
        <Section>工程设置</Section>
        <Section>绘图输入</Section>
        <Types>
          <TypeList>
            {types.map(([name, child], i) => (
              <TypeRow key={i} $child={child} $selected={name === "板受力筋(S)"}>
                <span>
                  <Mixed>{name}</Mixed>
                </span>
                {name === "CAD识别" && (
                  <>
                    <Icon name="book" />
                    <NewTag>NEW</NewTag>
                  </>
                )}
              </TypeRow>
            ))}
          </TypeList>
        </Types>
      </Nav>
      <Members>
        <MembersTitle>
          构件列表
          <div>
            <PinButton aria-label="固定">
              <Icon name="pin" />
            </PinButton>
            <IconButton aria-label="关闭">
              <Icon name="close" />
            </IconButton>
          </div>
        </MembersTitle>
        <MembersTools>
          <MenuAnchor>
            <NewButton>
              <Icon name="add" />
              新建
              <Caret />
            </NewButton>
            <Menu>
              <MenuItem>新建板受力筋</MenuItem>
              <MenuItem>新建跨板受力筋</MenuItem>
            </Menu>
            <Ring viewBox="0 0 148 40" aria-hidden="true">
              <ellipse cx="74" cy="20" rx="70" ry="17" fill="none" stroke="#f03c37" strokeWidth="3" />
            </Ring>
          </MenuAnchor>
          <IconButton $wide aria-label="删除">
            <Icon name="remove" />
          </IconButton>
          <IconButton $wide aria-label="复制">
            <Icon name="duplicate" />
          </IconButton>
        </MembersTools>
        <SearchRow>
          <Icon name="search" />
        </SearchRow>
        <Tree>
          <Member>
            <Icon name="gear" />
            <Mixed>KBSLJ-1</Mixed>
          </Member>
        </Tree>
      </Members>
      <Work>
        <Bar $height={27}>
          <Strip $low>
            <Grip $gap={2} />
            {renderTools(editTools)}
          </Strip>
        </Bar>
        <Bar $height={28}>
          <Strip $low>
            <Grip $gap={2} />
            <Combo name="楼层" value="首层" width={58} />
            <Combo name="类别" value="板" width={70} />
            <Combo name="构件类型" value="板受力筋" width={70} />
            <Combo name="构件" value="KBSLJ-1" width={70} />
            <Combo name="分层" value="分层板1" width={70} />
            {renderTools(panelTools)}
          </Strip>
          <Strip $grow $low>
            <Grip />
            {renderTools(axisTools)}
          </Strip>
        </Bar>
        <Bar $height={29}>
          <Strip $grow $low>
            <Grip $gap={2} />
            {renderTools(drawTools)}
            <Combo name="半径" value="2500" width={56} framed />
            {renderTools(slabTools)}
          </Strip>
        </Bar>
        <Drawing />
      </Work>
    </Body>
    <PropertyEditor />
    <DisplayPanel />
  </Shell>
)

export default App
